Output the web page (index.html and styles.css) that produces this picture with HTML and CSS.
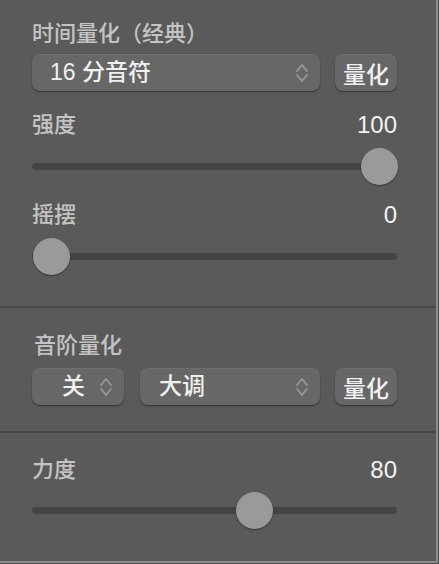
FILE: index.html
```html
<!DOCTYPE html>
<html lang="zh-CN">

<head>
    <meta charset="UTF-8">
    <meta name="viewport" content="width=device-width, initial-scale=1.0">
    <title>量化</title>
    <link rel="stylesheet" href="styles.css">
</head>

<body>

    <div class="panel">

        <!-- Time quantize (classic) -->
        <section class="section section-time">
            <div class="title">时间量化（经典）</div>
            <div class="control-row">
                <div class="popup popup-wide">
                    <span class="popup-text">16 分音符</span>
                    <svg class="chevrons" viewBox="0 0 14 22" width="14" height="22">
                        <path d="M2 9 L7 3 L12 9" />
                        <path d="M2 13 L7 19 L12 13" />
                    </svg>
                </div>
                <button class="btn">量化</button>
            </div>

            <div class="field field-first">
                <div class="field-head">
                    <span class="label">强度</span>
                    <span class="value">100</span>
                </div>
                <div class="slider">
                    <div class="track"></div>
                    <div class="knob" style="left: 100%;"></div>
                </div>
            </div>

            <div class="field">
                <div class="field-head">
                    <span class="label">摇摆</span>
                    <span class="value">0</span>
                </div>
                <div class="slider">
                    <div class="track"></div>
                    <div class="knob" style="left: 0%;"></div>
                </div>
            </div>
        </section>

        <!-- Scale quantize -->
        <section class="section section-scale">
            <div class="title">音阶量化</div>
            <div class="control-row">
                <div class="popup popup-small">
                    <span class="popup-text">关</span>
                    <svg class="chevrons" viewBox="0 0 14 22" width="14" height="22">
                        <path d="M2 9 L7 3 L12 9" />
                        <path d="M2 13 L7 19 L12 13" />
                    </svg>
                </div>
                <div class="popup popup-mid">
                    <span class="popup-text">大调</span>
                    <svg class="chevrons" viewBox="0 0 14 22" width="14" height="22">
                        <path d="M2 9 L7 3 L12 9" />
                        <path d="M2 13 L7 19 L12 13" />
                    </svg>
                </div>
                <button class="btn">量化</button>
            </div>
        </section>

        <!-- Velocity -->
        <section class="section section-velocity">
            <div class="field">
                <div class="field-head">
                    <span class="label">力度</span>
                    <span class="value">80</span>
                </div>
                <div class="slider">
                    <div class="track"></div>
                    <div class="knob" style="left: 62%;"></div>
                </div>
            </div>
        </section>

    </div>

</body>

</html>
```

FILE: styles.css
```css
* {
    margin: 0;
    padding: 0;
    box-sizing: border-box;
}

html,
body {
    background-color: #4a4a4a;
}

body {
    width: 439px;
    height: 564px;
    font-family: "Liberation Sans", "Noto Sans CJK SC", sans-serif;
    color: #c2c2c2;
}

.panel {
    width: 438px;
    height: 563px;
    background-color: #5a5a5a;
    border-right: 2px solid #8c8c8c;
    border-bottom: 2px solid #8c8c8c;
}

/* Sections */
.section {
    padding: 21px 39px 30px 32px;
    border-bottom: 2px solid #474747;
}

.section-scale {
    padding-top: 25px;
    padding-bottom: 26px;
}

.section-velocity {
    padding-top: 24px;
    border-bottom: none;
}

.title,
.label {
    font-size: 22px;
    font-weight: 500;
    line-height: 26px;
    color: #c4c4c4;
}

.section-scale .title {
    padding-left: 2px;
}

/* Popups and buttons */
.control-row {
    display: flex;
    gap: 15px;
    margin-top: 7px;
}

.section-scale .control-row {
    margin-top: 9px;
}

.popup,
.btn {
    height: 37px;
    border-radius: 8px;
    background-color: #676767;
    box-shadow: 0 1px 1.5px rgba(0, 0, 0, 0.45), inset 0 1px 0 rgba(255, 255, 255, 0.06);
    color: #f0f0f0;
    font-family: "Liberation Sans", "Noto Sans CJK SC", sans-serif;
    font-size: 23px;
    font-weight: 500;
}

.popup {
    display: flex;
    align-items: center;
    justify-content: space-between;
    padding: 0 11px 0 18px;
}

.popup-wide {
    width: 288px;
}

.popup-small {
    width: 92px;
    padding-left: 30px;
    margin-right: 1px;
}

.popup-mid {
    width: 180px;
    padding-left: 19px;
}

.popup-text {
    line-height: 37px;
}

.chevrons {
    fill: none;
    stroke: #9a9a9a;
    stroke-width: 1.7;
    stroke-linecap: round;
    stroke-linejoin: round;
}

.btn {
    width: 62px;
    border: none;
    padding: 0;
    text-align: center;
    cursor: pointer;
}

/* Sliders */
.field {
    margin-top: 16px;
}

.field-first {
    margin-top: 21px;
}

.section-velocity .field {
    margin-top: 0;
}

.field-head {
    display: flex;
    justify-content: space-between;
    align-items: center;
}

.value {
    font-size: 24px;
    line-height: 26px;
    color: #f2f2f2;
}

.slider {
    position: relative;
    height: 38px;
    margin: 10px 18px 0 19px;
}

.section-velocity .slider {
    margin-top: 9px;
}

.track {
    position: absolute;
    top: 15px;
    left: -19px;
    right: -18px;
    height: 7px;
    border-radius: 4px;
    background-color: #444444;
}

.knob {
    position: absolute;
    top: 0;
    width: 37px;
    height: 37px;
    margin-left: -18px;
    border-radius: 50%;
    background-color: #9a9a9a;
    box-shadow: 0 1px 1.5px rgba(0, 0, 0, 0.4);
}
```
